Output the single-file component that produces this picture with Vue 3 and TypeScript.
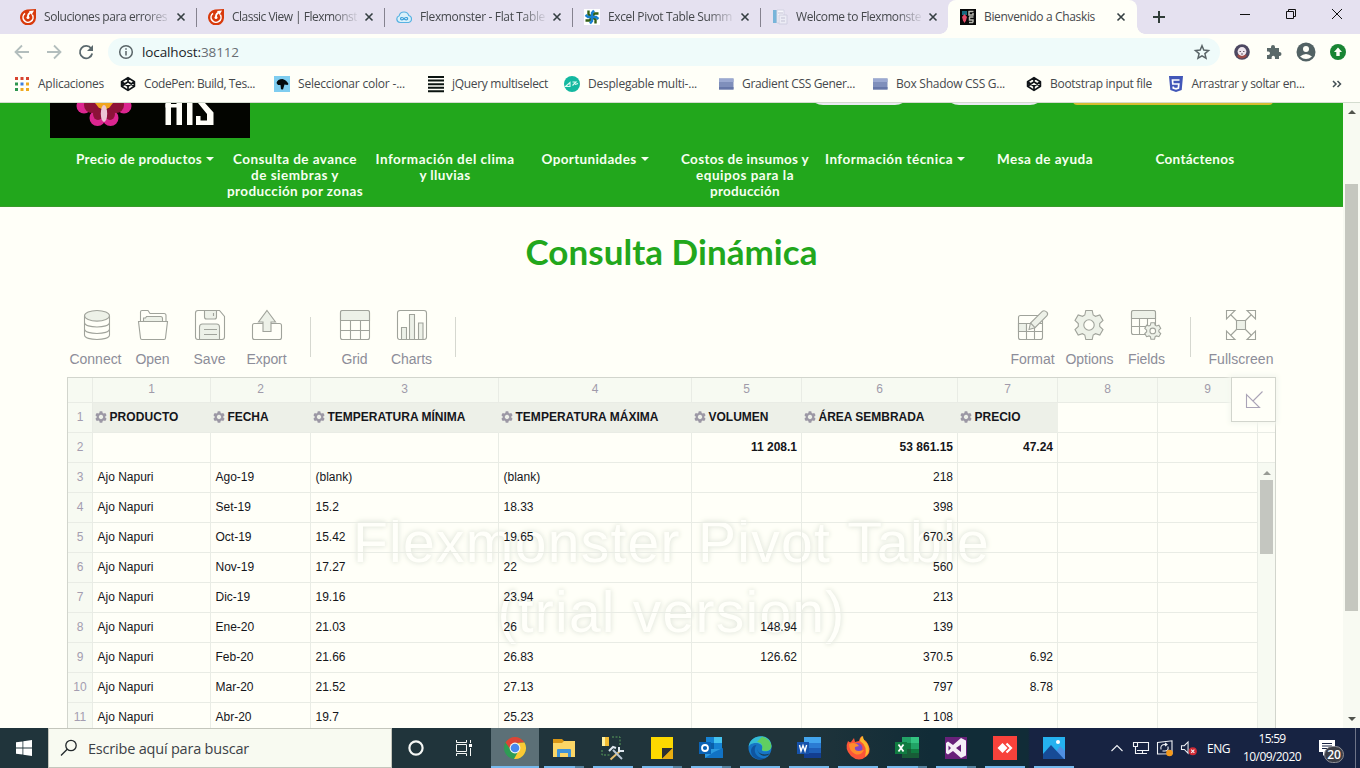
<script setup lang="ts">
interface Tab { title: string; width: number; icon: string }
interface Mark { title: string; width: number; icon: string }
interface Tool { label: string; icon: string; width: number }

// Spreads the letters of a label over a given pixel width.
const vFit = {
  mounted(el: HTMLElement, binding: { value: number }) {
    if (!binding.value) return
    const text = (el.textContent || '').trim()
    const natural = el.getBoundingClientRect().width
    el.style.letterSpacing = (binding.value - natural) / text.length + 'px'
  },
}

const pen = '<path d="M8 1.6 14.4 5.8V10.2L8 14.4 1.6 10.2V5.8Z M1.6 5.8 8 10.2 14.4 5.8 M1.6 10.2 8 5.8 14.4 10.2 M8 1.6V5.8M8 10.2V14.4" fill="none" stroke="#101418" stroke-width="1.7" stroke-linejoin="round"/>'
const folder = '<path d="M1 2.500h14.500v11H1z" fill="#7f8fbb"/><path d="M1 2.500h14.500v3.500H1z" fill="#9ba9d1"/><path d="M1 11h14.500v2.500H1z" fill="#6677a8"/>'
const swirl = '<path d="M7 .5 16 0v8a8 8 0 1 1-9-7.500z" fill="#d83a0c"/><path d="M5 4.300A5 5 0 1 0 12.300 5.600" fill="none" stroke="#fff" stroke-width="1.600"/><path d="M10.500 3.500Q7.500 5 8 8.500" fill="none" stroke="#fff" stroke-width="1.700"/><circle cx="8" cy="8.500" r="1.500" fill="#fff"/><path d="m9 2 5-.5-2.500 4.500z" fill="#fff"/>'

const tabs: Tab[] = [
  { title: 'Soluciones para errores', width: 123, icon: swirl },
  { title: 'Classic View | Flexmonst', width: 125, icon: swirl },
  { title: 'Flexmonster - Flat Table', width: 125, icon: '<path d="M4 13.500a3.500 3.500 0 0 1-.8-6.800A5 5 0 0 1 12.800 6.500a3.600 3.600 0 0 1 0 7z" fill="#d9f0fa" stroke="#58b2e2" stroke-width="1.200"/><path d="M8 9.700c-1-1.500-3.400-1.700-3.400 0s2.400 1.500 3.400 0 3.600-1.700 3.600 0-2.600 1.500-3.600 0z" fill="none" stroke="#3a9fda" stroke-width="1.200"/>' },
  { title: 'Excel Pivot Table Summ', width: 124, icon: '<path d="M0 0h16v16H0z" fill="#fff"/><g fill="none" stroke-width="2.400"><path d="M8 8 4.500 5.500V1.500M8 8l2.500-3.500h4M8 8l3.500 2.500v4M8 8l-2.500 3.500h-4" stroke="#335f16"/><path d="M8 8V4l2-2.500M8 8h4l2.500 2M8 8v4l-2 2.500M8 8H4L1.500 6" stroke="#177fd0"/></g>' },
  { title: 'Welcome to Flexmonste', width: 125, icon: '<path d="M1 1h4v13H1z" fill="#78b5da"/><path d="M5 1h7v13H5z" fill="#f6f6fb" stroke="#d3d3e3"/><path d="M7 6h8v9H7z" fill="#ececf5" stroke="#d0cfe0"/><path d="M9 9h4M9 12h4M6 4h5" stroke="#c2c1d3"/>' },
  { title: 'Bienvenido a Chaskis', width: 111, icon: '<path d="M0 0h16v16H0z" fill="#090909"/><path d="M2 2h5v4H2z" fill="#176c80"/><path d="m4.500 5 2.500 3-1 3.500-1.500 2.500L3 11.500 2 8z" fill="#e24c68"/><path d="M8.500 2.500h5M9 2v4h4V4M9 8h4.500M9.500 8v3h3.500v2.500M9 13.500h4" fill="none" stroke="#b8b8b0" stroke-width="1.500"/>' },
]

const marks: Mark[] = [
  { title: 'Aplicaciones', width: 66, icon: '<path d="M1 1h3v3H1zM6.500 1h3v3h-3zM12 1h3v3h-3z" fill="#d8442f"/><path d="M1 6.500h3v3H1z" fill="#2f9650"/><path d="M6.500 6.500h3v3h-3z" fill="#3d7fe0"/><path d="M12 6.500h3v3h-3zM12 12h3v3h-3zM6.500 12h3v3h-3z" fill="#efaa20"/><path d="M1 12h3v3H1z" fill="#2f9650"/>' },
  { title: 'CodePen: Build, Tes...', width: 111, icon: pen },
  { title: 'Seleccionar color -...', width: 107, icon: '<path d="M0 0h16v16H0z" fill="#7fcdf0"/><path d="M2.500 7q1-4 6-4 4 1 6 5l-1 1-3-.5-1.500 5-2-.2L6.500 9H4z" fill="#050a0c"/>' },
  { title: 'jQuery multiselect', width: 96, icon: '<path d="M0 1h16M0 4.600h16M0 8.200h16M0 11.800h16M0 15.200h16" stroke="#0b1410" stroke-width="2"/>' },
  { title: 'Desplegable multi-...', width: 109, icon: '<circle cx="8" cy="8" r="8" fill="#14b8a0"/><path d="M1.500 10.500 6 6.500v4zM8.500 6h3.500L8.500 9.500M11 8.500 14 7.500" fill="none" stroke="#dffaf2" stroke-width="1.100"/>' },
  { title: 'Gradient CSS Gener...', width: 113, icon: folder },
  { title: 'Box Shadow CSS G...', width: 109, icon: folder },
  { title: 'Bootstrap input file', width: 102, icon: pen },
  { title: 'Arrastrar y soltar en...', width: 113, icon: '<path d="M1 0h14l-1.300 14L8 16l-5.700-2z" fill="#4257b8"/><path d="M11.500 4h-7l.3 4h6l-.4 4L8 12.800 5.300 12l-.1-1.500" fill="none" stroke="#fff" stroke-width="1.700"/>' },
]

const menu = [
  { lines: ['Precio de productos'], widths: [126], caret: true },
  { lines: ['Consulta de avance', 'de siembras y', 'producción por zonas'], widths: [124, 88, 136], caret: false },
  { lines: ['Información del clima', 'y lluvias'], widths: [139, 51], caret: false },
  { lines: ['Oportunidades'], widths: [95], caret: true },
  { lines: ['Costos de insumos y', 'equipos para la', 'producción'], widths: [128, 98, 70], caret: false },
  { lines: ['Información técnica'], widths: [128], caret: true },
  { lines: ['Mesa de ayuda'], widths: [96], caret: false },
  { lines: ['Contáctenos'], widths: [79], caret: false },
]

const gear = 'M11.800 .5h6.400l1 4.500 2.300 1.300 4.300-1.300 3.200 5.500-3.300 3.100v2.800l3.300 3.100-3.200 5.500-4.300-1.300-2.300 1.300-1 4.500h-6.400l-1-4.500-2.300-1.300-4.300 1.300L1 19.500l3.300-3.100v-2.800L1 10.500 4.200 5l4.300 1.300L10.800 5z'
const group1: Tool[] = [
  { label: 'Connect', width: 52, icon: '<path d="M3.500 6v19c0 6 25 6 25 0V6" class="o"/><path d="M3.500 12.500c0 6 25 6 25 0M3.500 19c0 6 25 6 25 0" class="o"/><ellipse cx="16" cy="5.800" rx="12.500" ry="5.300" class="f"/>' },
  { label: 'Open', width: 34, icon: '<path d="M2.500 11V2q0-1.500 1.500-1.500h6l2 3h14q2 0 2 2V11" class="o"/><path d="M5.500 11V8h2l1-1.500h14q2 0 2 2V11" class="f"/><path d="M.5 11.500h29L27.500 28q0 1.500-1.500 1.500H4Q2.500 29.500 2.500 28z" class="o"/>' },
  { label: 'Save', width: 32, icon: '<path d="M3 .5h21.500l5 6V27q0 2.500-2.500 2.500H3Q.5 29.500.5 27V3Q.5.5 3 .5z" class="o"/><path d="M9.500.5h12V7q0 2-2 2h-8q-2 0-2-2zM4.500 29.500V17q0-3 3-3h14q3 0 3 3v12.500z" class="f"/><path d="M18.500 3v3M9 19.500h13M9 24.500h13" class="o"/>' },
  { label: 'Export', width: 40, icon: '<path d="M2.500 13.500h25q2 0 2 2v12q0 2-2 2h-25q-2 0-2-2v-12q0-2 2-2z" class="o"/><path d="M15 .5 23.500 12H19v9.500h-8V12H6.500z" class="f"/>' },
]
const group2: Tool[] = [
  { label: 'Grid', width: 26, icon: '<rect x=".5" y=".5" width="29" height="29" rx="2" class="o"/><path d="M.5 10.500V2.500q0-2 2-2h25q2 0 2 2v8z" class="f"/><path d="M10.500 10.500v19M20.500 10.500v19M.5 20.500h29" class="o"/>' },
  { label: 'Charts', width: 41, icon: '<rect x=".5" y=".5" width="29" height="29" rx="2.500" class="o"/><path d="M4.500 29.500v-12h5v12zM12.500 29.500v-25h5v25zM21.500 29.500V13h4.500v16.500z" class="f"/>' },
]
const group3: Tool[] = [
  { label: 'Format', width: 44, icon: '<rect x=".5" y="5.500" width="24" height="24" rx="2" class="o"/><path d="M.5 13.500h8v8h-8z" class="f"/><path d="M.5 13.500h24M.5 21.500h24M8.500 13.500v16M16.500 13.500v16" class="o"/><path d="M11 19.500 12.500 13 24.500 1.200Q26.500 0 28.800 2.200 30.500 4 28.800 6L17 17.700z" class="f"/><path d="m12.500 13 4.500 4.700" class="o"/>' },
  { label: 'Options', width: 48, icon: '<path d="' + gear + '" class="f"/><circle cx="15" cy="15" r="5.200" class="h"/>' },
  { label: 'Fields', width: 37, icon: '<rect x=".5" y=".5" width="24" height="24" rx="2" class="o"/><path d="M.5 8.500v-6q0-2 2-2h20q2 0 2 2v6z" class="f"/><path d="M8.500 8.500v16M16.500 8.500v16M.5 16.500h24" class="o"/><g transform="translate(13.200 12.400) scale(.57)"><path d="' + gear + '" class="f w"/><circle cx="15" cy="15" r="5" class="h w"/></g>' },
]
const group4: Tool[] = [
  { label: 'Fullscreen', width: 65, icon: '<path d="M10.500 10.500h9v9h-9z" class="f"/><path d="m4.500 4.500 6 6m9 0 6-6m-15 15-6 6m15-6 6 6" class="o"/><path d="M.5.500h8.500l-8.500 8.500zM21 .5h8.500V9zM.5 21v8.500H9zM29.500 21v8.500H21z" class="h"/>' },
]

const headers = ['PRODUCTO', 'FECHA', 'TEMPERATURA MÍNIMA', 'TEMPERATURA MÁXIMA', 'VOLUMEN', 'ÁREA SEMBRADA', 'PRECIO']
const headerWidths = [69, 41, 138, 143, 60, 106, 46]
const rows: string[][] = [
  ['', '', '', '', '11 208.1', '53 861.15', '47.24'],
  ['Ajo Napuri', 'Ago-19', '(blank)', '(blank)', '', '218', ''],
  ['Ajo Napuri', 'Set-19', '15.2', '18.33', '', '398', ''],
  ['Ajo Napuri', 'Oct-19', '15.42', '19.65', '', '670.3', ''],
  ['Ajo Napuri', 'Nov-19', '17.27', '22', '', '560', ''],
  ['Ajo Napuri', 'Dic-19', '19.16', '23.94', '', '213', ''],
  ['Ajo Napuri', 'Ene-20', '21.03', '26', '148.94', '139', ''],
  ['Ajo Napuri', 'Feb-20', '21.66', '26.83', '126.62', '370.5', '6.92'],
  ['Ajo Napuri', 'Mar-20', '21.52', '27.13', '', '797', '8.78'],
  ['Ajo Napuri', 'Abr-20', '19.7', '25.23', '', '1 108', ''],
]

const apps = [
  { name: 'chrome', split: false, icon: '<circle cx="12" cy="12" r="11" fill="#2f9c55"/><path d="M2.500 6.500A11 11 0 0 1 21.500 6.500L12 7 8 14z" fill="#dc4437"/><path d="M21.500 6.500A11 11 0 0 1 11 23l5-9-1-7z" fill="#fcc934"/><circle cx="12" cy="12" r="5.400" fill="#f4f5f0"/><circle cx="12" cy="12" r="4.300" fill="#4688f0"/>' },
  { name: 'explorer', split: true, icon: '<path d="M1 3h9l2 2h11v5H1z" fill="#d89616"/><path d="M1 7h9l2-2h11v16H1z" fill="#fbd666"/><path d="M5 21v-7q0-1 1-1h12q1 0 1 1v7h-3v-4H8v4z" fill="#3f93d8"/>' },
  { name: 'sql', split: false, icon: '<path d="M1 1h7v9H1z" fill="#f3bc32"/><path d="M1 1h3v9H1z" fill="#fff0a0"/><path d="M11 1h8v9M1 14v5h9" fill="none" stroke="#5aa05c" stroke-dasharray="2 1.500"/><path d="m9.500 23.500 10-9" stroke="#e7bf71" stroke-width="2"/><path d="m12 14 9 9" stroke="#b8c5d4" stroke-width="2"/><path d="m8 15 4-4 3 1M18 11v4h5" fill="none" stroke="#dfe7ef" stroke-width="2"/>' },
  { name: 'notes', split: true, icon: '<path d="M1 1h22v22H1z" fill="#fdd900"/><path d="M12 23V12h11z" fill="#2d3033"/><path d="m12 23 11-11v11z" fill="#e9ad10"/>' },
  { name: 'outlook', split: true, icon: '<path d="M7 1h16v12H7z" fill="#1683d4"/><path d="M15 1h8v6h-8z" fill="#46c4f0"/><path d="M7 7h8v7H7z" fill="#0a5fa9"/><path d="M6 13h18v9H6z" fill="#2b9ae0"/><path d="m6 22 9-6 9-4v10z" fill="#1172c4"/><path d="M0 6h12v12H0z" fill="#0b63b5"/><circle cx="6" cy="12" r="3" fill="none" stroke="#fff" stroke-width="1.800"/>' },
  { name: 'edge', split: false, icon: '<circle cx="12" cy="12" r="11.500" fill="#1675c5"/><path d="M.6 11C2-3 23-3.500 23.500 10c0 5-6 6.500-9.500 4.500 2-3-.5-7-5-7.500C4 6.500 1 9 .6 11z" fill="#35bdd5"/><path d="M14 .8c12 2.700 12 16.200 2 14-3.500-.8-1.500-2-1.500-4C14 7 11 6 9 6z" fill="#60ce61"/><path d="M8.500 9c-5 7 1.500 15 9.500 13C11 25.500 3 22 3 15c0-3 2.500-6 5.500-6z" fill="#0f55a0"/><path d="M9 11.500c0 6 6 8.500 12.500 6-3 4.500-12.500 2-12.500-6z" fill="#1b3a50"/>' },
  { name: 'word', split: false, icon: '<path d="M7 1h17v6H7z" fill="#43a5ee"/><path d="M7 7h17v5H7z" fill="#2b7cd3"/><path d="M7 12h17v5H7z" fill="#1e5fb8"/><path d="M7 17h17v5H7z" fill="#133e91"/><path d="M0 6h12v12H0z" fill="#1652ab"/><path d="m2.500 9 1.500 6 2-5.500L8 15l1.600-6" fill="none" stroke="#fff" stroke-width="1.400"/>' },
  { name: 'firefox', split: false, icon: '<path d="M2 5q2 2 3 1l3-4 1 4 4-1q0-3 3-5 0 3 4 5 7 9 1 15-8 7-16 0Q-2 13 2 5z" fill="#fb5538"/><path d="M14 5q0-4 3-5 0 4 4 7 5 9-2 14 3-11-5-16z" fill="#fcb72c"/><circle cx="11.500" cy="12" r="5" fill="#8048c5"/><path d="M3 8q4-2 8 0l2 2-4 1q-1 4 4 4l5-1q-3 6-9 4-6-3-6-10z" fill="#ff8c2c"/>' },
  { name: 'excel', split: true, icon: '<path d="M7 1h9v6H7z" fill="#21a366"/><path d="M16 1h8v6h-8z" fill="#33c481"/><path d="M7 7h9v6H7z" fill="#107c41"/><path d="M16 7h8v6h-8z" fill="#21a366"/><path d="M7 13h17v9H7z" fill="#185c37"/><path d="M16 13h8v4h-8z" fill="#107c41"/><path d="M0 6h12v12H0z" fill="#107c41"/><path d="m3.500 8.500 5 7M8.500 8.500l-5 7" stroke="#fff" stroke-width="1.800"/>' },
  { name: 'studio', split: true, icon: '<path d="M1 1h22v22H1z" fill="#68217a"/><path fill-rule="evenodd" d="m17 2 5 2.500v15L17 22l-8-7-5 3.500L2 17V7l2-1.500L9 9zM17 8.500 12 12l5 4zM4.500 9.500v5L7 12z" fill="#f5eff7"/>' },
  { name: 'anydesk', split: false, icon: '<path d="M0 0h24v24H0z" fill="#f8423b"/><path d="m9.500 7 5 5-5 5-5-5z" fill="#fff"/><path d="m13.500 7.500 4.500 4.500-4.500 4.500" fill="none" stroke="#fff" stroke-width="2.200"/>' },
  { name: 'photos', split: false, icon: '<path d="M1 1h22v22H1z" fill="#25b1ef"/><path d="m9 23 9-13 5 5v8z" fill="#4f8fe2"/><path d="M1 18 9 9l13 14H1z" fill="#174b96"/><circle cx="16" cy="6" r="2" fill="#fff"/>' },
]
</script>

<template>
  <div class="screen">
    <div class="tabstrip">
      <div v-for="(t, i) in tabs" :key="i" class="tab" :class="{ active: i === 5, last: i === 4 }">
        <svg class="fav" viewBox="0 0 16 16" v-html="t.icon"></svg>
        <div class="tab-title"><span v-fit="t.width" class="ui">{{ t.title }}</span></div>
        <svg class="close" viewBox="0 0 10 10"><path d="M1.500 1.500l7 7M8.500 1.500l-7 7" /></svg>
      </div>
      <svg class="plus" viewBox="0 0 12 12"><path d="M6 0v12M0 6h12" /></svg>
      <div class="controls">
        <svg viewBox="0 0 12 12"><path d="M1 6.500h10" /></svg>
        <svg viewBox="0 0 12 12"><path d="M1.500 3.500h7v7h-7zM3.500 3.500v-2h7v7h-2" /></svg>
        <svg viewBox="0 0 12 12"><path d="M1 1l10 10M11 1L1 11" /></svg>
      </div>
    </div>

    <div class="addressbar">
      <svg class="nav-ic dim" viewBox="0 0 16 16"><path d="M15 8H2M8 1.500 1.500 8 8 14.500" /></svg>
      <svg class="nav-ic dim" viewBox="0 0 16 16"><path d="M1 8h13M8 1.500 14.500 8 8 14.500" /></svg>
      <svg class="nav-ic" viewBox="0 0 16 16"><path d="M13.200 4.500A6.200 6.200 0 1 0 14.200 9.500" stroke-width="2" /><path d="M15 1v6H9z" fill="#5b696d" stroke="none" /></svg>
      <div class="omnibox">
        <svg class="info" viewBox="0 0 16 16"><circle cx="8" cy="8" r="6.300" /><path d="M8 7v4.500M8 4.300v1.500" /></svg>
        <span v-fit="97" class="url">localhost:<i>38112</i></span>
        <svg class="star" viewBox="0 0 16 16"><path d="m8 1.800 1.800 4.300 4.700.4-3.600 3.100 1.100 4.600L8 11.800l-4 2.400 1.100-4.600-3.600-3.100 4.700-.4z" /></svg>
      </div>
      <svg class="ext e1" viewBox="0 0 16 16"><circle cx="8" cy="8" r="7.800" fill="#4d4861" /><path d="M3 12q4 5 10 0l-3-3H6z" fill="#9b4b47" /><circle cx="8" cy="7.500" r="4.400" fill="#eee5ed" /><path d="M5.500 7.500h1.500M9 7.500h1.500M7 10h2" stroke="#6b5b6b" /></svg>
      <svg class="ext e2" viewBox="0 0 16 16"><path d="M1 4h4V3a2 2 0 0 1 4 0v1h4v4h.500a2 2 0 0 1 0 4H13v3H9v-1.500a1.700 1.700 0 0 0-3.400 0V15H1v-4h1.300a1.700 1.700 0 0 0 0-3.400H1z" fill="#5a6969" /></svg>
      <svg class="ext e3" viewBox="0 0 20 20"><circle cx="10" cy="10" r="9.500" fill="#526264" /><circle cx="10" cy="7" r="3" fill="#fffff8" /><path d="M4 14.500q6-5 12 0-6 5-12 0z" fill="#fffff8" /></svg>
      <svg class="ext e4" viewBox="0 0 16 16"><circle cx="8" cy="8" r="8" fill="#198534" /><path d="m8 3.500 4 4.500H9.700v4H6.300V8H4z" fill="#fffff8" /></svg>
    </div>

    <div class="bookmarks">
      <div v-for="(m, i) in marks" :key="i" class="mark">
        <svg viewBox="0 0 16 16" v-html="m.icon"></svg>
        <span v-fit="m.width" class="ui">{{ m.title }}</span>
      </div>
      <svg class="more" viewBox="0 0 10 8"><path d="m1 1 3 3-3 3M5.500 1l3 3-3 3" /></svg>
    </div>

    <div class="viewport">
      <div class="page">
        <header>
          <div class="top">
            <svg class="logo" viewBox="0 0 200 35">
              <rect width="200" height="35" fill="#030500" />
              <g fill="#dc2690"><circle cx="34" cy="3" r="7.500" /><circle cx="74" cy="3" r="7.500" /><circle cx="47.500" cy="15" r="8" /><circle cx="60.500" cy="15" r="8" /></g>
              <g fill="#8d1238"><circle cx="42" cy="2" r="8" /><circle cx="66" cy="2" r="8" /><ellipse cx="48" cy="11" rx="5" ry="6" /><ellipse cx="60" cy="11" rx="5" ry="6" /></g>
              <path d="M45 0h18l-4 5-5 2-5-2z" fill="#f0a51d" />
              <ellipse cx="54" cy="10.500" rx="3.200" ry="8.500" fill="#ecc5d4" />
              <g fill="#fffff8">
                <rect x="115.500" width="5.500" height="22" /><rect x="126.500" width="5.500" height="22" /><rect x="115.500" y="1" width="16.500" height="3.500" />
                <rect x="137" width="5.500" height="22" />
                <path d="M148 0h7l8.500 9.500V22H146v-9h4.500v4.500h6.500V11z" />
              </g>
            </svg>
            <div class="pill a"></div><div class="pill b"></div><div class="pill c"></div>
          </div>
          <nav>
            <div v-for="(m, i) in menu" :key="i" class="menu-item">
              <div v-for="(l, j) in m.lines" :key="j" class="menu-line">
                <span v-fit="m.widths[j]">{{ l }}</span><b v-if="m.caret" class="caret"></b>
              </div>
            </div>
          </nav>
        </header>

        <h1><span v-fit="292">Consulta Dinámica</span></h1>

        <div class="toolbar">
          <template v-for="(g, gi) in [group1, group2, group3, group4]" :key="gi">
            <div class="group" :class="'g' + gi">
              <div v-for="t in g" :key="t.label" class="tool">
                <svg viewBox="0 0 30 30" v-html="t.icon"></svg>
                <span v-fit="t.width">{{ t.label }}</span>
              </div>
            </div>
            <i v-if="gi < 3" class="sep" :class="'s' + gi"></i>
          </template>
        </div>

        <div class="grid-box">
          <div class="watermark">
            <div><span v-fit="637">Flexmonster Pivot Table</span></div>
            <div><span v-fit="348">(trial version)</span></div>
          </div>
          <div class="row head">
            <div class="cell num"></div>
            <div v-for="n in 9" :key="n" class="cell">{{ n }}</div>
            <div class="cell end"></div>
          </div>
          <div class="row titles">
            <div class="cell num">1</div>
            <div v-for="(h, i) in headers" :key="h" class="cell field">
              <svg viewBox="0 0 30 30"><path fill-rule="evenodd" :d="gear + 'M15 9.500a5.500 5.500 0 1 0 .01 0z'" /></svg>
              <span v-fit="headerWidths[i]">{{ h }}</span>
            </div>
            <div class="cell"></div><div class="cell"></div><div class="cell end"></div>
          </div>
          <div v-for="(r, i) in rows" :key="i" class="row" :class="{ total: i === 0 }">
            <div class="cell num">{{ i + 2 }}</div>
            <div v-for="(c, j) in r" :key="j" class="cell" :class="{ right: j > 3 }">{{ c }}</div>
            <div class="cell"></div><div class="cell"></div>
            <div class="cell end" :class="{ track: i > 0 }"></div>
          </div>
          <div class="inner-scroll"><b class="up"></b><b class="thumb"></b></div>
          <div class="corner">
            <svg viewBox="0 0 18 18"><path d="M1.500 3.500v13h13zM8 10l9.500-9.500" /></svg>
          </div>
        </div>
      </div>
      <div class="scrollbar"><b class="up"></b><b class="thumb"></b><b class="down"></b></div>
    </div>

    <div class="taskbar">
      <div class="start"><svg viewBox="0 0 16 16"><path d="M0 2.300 6.500 1.400v6.100H0zM7.300 1.300 16 0v7.500H7.300zM0 8.400h6.500v6.200L0 13.700zM7.300 8.400H16V16l-8.700-1.300z" /></svg></div>
      <div class="search">
        <svg viewBox="0 0 18 18"><circle cx="11" cy="6.500" r="5.200" /><path d="M7.200 10.300 1 16.500" /></svg>
        <span v-fit="161">Escribe aquí para buscar</span>
      </div>
      <div class="sys"><svg viewBox="0 0 16 16"><circle cx="8" cy="8" r="6.600" stroke-width="2.200" /></svg></div>
      <div class="sys"><svg viewBox="0 0 16 16"><path d="M.5 0v2.500h10V0M.5 4.500h10v7H.5zM.5 16v-2.500h10V16M14.500 0v3M14.500 8v8" /><path d="M13 4h3v3h-3z" fill="#fff" stroke="none" /></svg></div>
      <div class="apps">
        <div v-for="a in apps" :key="a.name" class="app" :class="[a.name, { split: a.split }]">
          <svg viewBox="0 0 24 24" v-html="a.icon"></svg>
        </div>
      </div>
      <div class="tray">
        <svg class="t1" viewBox="0 0 16 16"><path d="m2.500 11 5.500-5.500 5.500 5.500" /></svg>
        <svg class="t2" viewBox="0 0 16 16"><path d="M4.500 2.500h11v8H4M9.500 10.500v3M5 13.500h9M.5 2.500h4v4h-4zM2.500 6.500v7h3" /></svg>
        <svg class="t3" viewBox="0 0 16 16"><path d="M.5 2.500 15 .800v13L.5 14zM4 9.500q-1-5 4-5h2M8 3l2 1.500L8 6M11 6.500q1 5-4 4.500H5.500" /><circle cx="12.500" cy="13" r="3.300" class="orange" /></svg>
        <svg class="t4" viewBox="0 0 17 16"><path d="M.5 5.500h3l4-4v12l-4-4h-3z" /><circle cx="12.500" cy="11.500" r="4.300" class="red" /><path d="m10.800 9.800 3.400 3.400M14.200 9.800l-3.400 3.400" /></svg>
        <span v-fit="23" class="lang">ENG</span>
        <div class="clock"><span v-fit="27">15:59</span><span v-fit="58">10/09/2020</span></div>
        <div class="notice">
          <svg viewBox="0 0 16 16"><path class="bubble" d="M0 0h16v12H8l-4 4v-4H0z" /><path class="lines" d="M3 3.500h10M3 6h10M3 8.500h7" /></svg>
          <b>20</b>
        </div>
      </div>
    </div>
  </div>
</template>

<style>
body { margin: 0; overflow: hidden; }
.o, .f, .h { stroke: #a0a39b; stroke-width: 1.1; }
.o { fill: none; }
.f { fill: #edf1e8; }
.h { fill: #fffff8; }
.w { stroke-width: 1.9; }
</style>

<style scoped>
.screen { width: 1360px; height: 768px; display: flex; flex-direction: column; background: #fffff8; overflow: hidden; font-family: "Liberation Sans", Arial, sans-serif; }
.screen * { box-sizing: border-box; }
svg { display: block; flex: none; overflow: visible; }
span { display: inline-block; white-space: nowrap; }
.ui { font: 12px/16px "Open Sans", "Noto Sans", sans-serif; color: #45484c; }

.tabstrip { height: 34px; flex: none; display: flex; background: #e5e1f0; padding-left: 8px; }
.tab { position: relative; width: 188px; height: 34px; display: flex; align-items: center; padding-left: 12px; }
.tab::after { content: ""; position: absolute; right: -1px; top: 8px; width: 1px; height: 19px; background: #85828f; }
.tab.last::after { display: none; }
.tab.active { width: 189px; background: #fffff8; border-radius: 8px 8px 0 0; }
.tab.active::before { content: ""; position: absolute; left: -8px; bottom: 0; width: 8px; height: 8px; background: radial-gradient(circle at 0 0, transparent 7.500px, #fffff8 8px); }
.tab.active::after { right: -8px; top: 26px; width: 8px; height: 8px; background: radial-gradient(circle at 100% 0, transparent 7.500px, #fffff8 8px); }
.fav { width: 16px; height: 16px; overflow: hidden; }
.tab-title { margin-left: 8px; width: 125px; overflow: hidden; height: 18px; mask-image: linear-gradient(90deg, #000 100px, transparent 128px); }
.tab-title .ui { display: block; width: max-content; padding-top: 1px; }
.active .tab-title { mask-image: none; }
.close { width: 10px; height: 10px; margin-left: 7px; }
.close path { stroke: #353f42; stroke-width: 1.6; }
.plus { width: 12px; height: 12px; margin: 11px 0 0 16px; }
.plus path { stroke: #303c38; stroke-width: 2; }
.controls { display: flex; gap: 34px; margin: 8px 0 0 74px; }
.controls svg { width: 12px; height: 12px; }
.controls path { fill: none; stroke: #111; stroke-width: 1; }

.addressbar { height: 36px; flex: none; display: flex; align-items: center; padding-left: 14px; }
.nav-ic { width: 16px; height: 16px; margin-right: 16px; }
.nav-ic path { fill: none; stroke: #5b696d; stroke-width: 1.8; }
.nav-ic.dim path { stroke: #b3bebd; }
.nav-ic path[fill] { fill: #5b696d; stroke: none; }
.omnibox { width: 1112px; height: 28px; margin-left: -2px; border-radius: 14px; background: #effbfa; display: flex; align-items: center; padding: 0 10px; }
.info, .star { width: 16px; height: 16px; }
.info *, .star * { fill: none; stroke: #596467; stroke-width: 1.5; }
.url { margin-left: 8px; font: 13.500px/18px "Open Sans", "Noto Sans", sans-serif; color: #202428; }
.url i { font-style: normal; color: #686d73; }
.star { margin-left: auto; }
.ext { width: 16px; height: 16px; }
.e1 { margin-left: 14px; }
.e2 { margin-left: 16px; }
.e3 { width: 20px; height: 20px; margin-left: 14px; }
.e4 { margin-left: 14px; }

.bookmarks { position: relative; height: 33px; flex: none; display: grid; grid-template-columns: 106px 154px 154px 136px 154px 154px 154px 142px 154px; padding-left: 14px; border-bottom: 1px solid #d4dccf; }
.mark { display: flex; align-items: center; height: 28px; }
.mark svg { width: 16px; height: 16px; margin-right: 8px; }
.mark:nth-child(9) svg { margin-left: -.5px; }
.more { position: absolute; left: 1332px; top: 10px; width: 10px; height: 8px; }
.more path { fill: none; stroke: #445055; stroke-width: 1.5; }

.viewport { height: 625px; flex: none; display: flex; overflow: hidden; }
.page { width: 1343px; height: 625px; overflow: hidden; }
header { height: 104px; background: #22a71c; border-bottom: 1px solid #399b2b; }
.top { height: 35px; display: flex; padding-left: 50px; }
.logo { width: 200px; height: 35px; overflow: hidden; }
.pill { height: 30px; margin-top: -28px; border-radius: 15px; background: #ebeaf2; clip-path: inset(28px 0 0 0); }
.a { margin-left: 558px; width: 102px; }
.b { margin-left: 34px; width: 101px; }
.c { margin-left: 28px; width: 200px; border-radius: 4px; background: #d4bd31; }
nav { display: flex; padding: 13px 0 0 70px; }
.menu-item { width: 150px; text-align: center; }
.menu-line { height: 16px; display: flex; align-items: center; justify-content: center; color: #f6fff0; font: 700 13.500px/16px Lato, sans-serif; }
.caret { border: 4px solid transparent; border-top-color: #f6fff0; border-bottom: 0; margin-left: 4px; }
h1 { margin: 0; height: 103px; padding-top: 22px; text-align: center; font: 700 35px/44px Lato, sans-serif; color: #22a71c; }

.toolbar { height: 67px; display: flex; padding-left: 67px; }
.group { display: flex; }
.tool { width: 57px; height: 60px; display: flex; flex-direction: column; align-items: center; color: #8d8d99; font-size: 14px; line-height: 16px; }
.tool svg { width: 30px; height: 30px; margin-bottom: 11px; }
.sep { width: 1px; height: 40px; margin-top: 7px; background: #d6d8d0; }
.s0 { margin: 7px 15px 0 15px; }
.s1 { margin: 7px 0 0 15px; }
.g2 { margin-left: 548px; }
.g2 .tool:nth-child(n+2) svg { margin-right: 1px; }
.s2 { margin: 7px 15px 0 15px; }
.g3 .tool { width: 70px; }

.grid-box { position: relative; z-index: 0; width: 1209px; margin-left: 67px; border: 1px solid #d2d5cd; border-bottom: 0; }
.row { display: grid; grid-template-columns: 25px 118px 100px 188px 193px 110px 156px 100px 100px 100px 17px; height: 30px; font-size: 12px; line-height: 29px; color: #15161b; }
.cell { border-right: 1px solid #e9ece5; border-bottom: 1px solid #e9ece5; padding: 0 4px 0 4.500px; white-space: nowrap; }
.cell.end { border-right: 0; }
.cell.right { text-align: right; }
.cell.num { background: #f7faf2; color: #a49db0; text-align: center; padding: 0; }
.head { height: 25px; line-height: 22px; background: #f7faf2; color: #a09aaa; text-align: center; }
.head .cell { padding: 0; }
.total { font-weight: 700; }
.total .num { font-weight: 400; }
.track { background: #f7faf2; border-bottom: 0; }
.cell.field { display: flex; align-items: center; background: #edf0e8; border-right-color: #edf0e8; font-weight: 700; padding: 0 0 0 2px; }
.field svg { width: 12px; height: 12px; margin: 0 2.500px 2px 0; }
.field svg path { fill: #9c98a5; }
.inner-scroll { position: absolute; left: 1190px; top: 85px; width: 17px; height: 265px; }
.up, .down { position: absolute; left: 5px; border: 4px solid transparent; border-bottom-color: #979a94; border-top: 0; top: 8px; }
.inner-scroll .thumb { position: absolute; left: 2px; top: 17px; width: 13px; height: 74px; background: #c4c6c0; }
.watermark { position: absolute; z-index: -1; left: 0; right: 0; top: 129px; text-align: center; font-size: 57px; line-height: 70px; color: #fffffa; pointer-events: none; text-shadow: 0 0 4px #e4e8de, 0 0 7px #e8ece3; }
.corner { position: absolute; right: -1px; top: -1px; width: 45px; height: 45px; border: 1px solid #d2d5cd; background: #fffff8; box-shadow: 0 0 5px 2px #f4f7ef; display: flex; align-items: center; justify-content: center; }
.corner svg { width: 18px; height: 18px; }
.corner path { fill: none; stroke: #aaa4b7; stroke-width: 1.1; }

.scrollbar { position: relative; width: 17px; background: #f8faf2; }
.scrollbar .up { border-bottom-color: #50534c; top: 7px; }
.scrollbar .thumb { position: absolute; left: 2px; top: 81px; width: 13px; height: 427px; background: #c5c7bf; }
.scrollbar .down { top: 614px; border: 4px solid transparent; border-top-color: #50534c; border-bottom: 0; }

.taskbar { height: 40px; flex: none; display: flex; color: #fff; font-family: "Open Sans", "Noto Sans", sans-serif; background: linear-gradient(90deg, #20343b 0 800px, #112c37 930px 1028px, #172342 1030px); }
.start, .sys { width: 48px; display: flex; align-items: center; justify-content: center; }
.start svg, .sys svg { width: 16px; height: 16px; }
.start path { fill: #fff; }
.sys circle, .sys path:first-child { fill: none; stroke: #f5f7f5; }
.search { width: 344px; background: #f8faf1; border: 1px solid #c4c6bc; display: flex; align-items: center; color: #3c4147; font-size: 14.500px; padding-left: 11px; }
.search svg { width: 18px; height: 18px; margin-right: 10px; }
.search svg * { fill: none; stroke: #22282b; stroke-width: 1.3; }
.apps { display: flex; margin-left: 3px; gap: 1px; }
.app { position: relative; width: 48px; height: 40px; display: flex; align-items: center; justify-content: center; }
.app svg { width: 24px; height: 24px; }
.app::after { content: ""; position: absolute; left: 4px; right: 4px; bottom: 0; height: 2px; background: #76b9ed; }
.app.split::after { background: linear-gradient(90deg, #76b9ed 31px, #55829f 31px); }
.chrome { background: #5c7077; }
.chrome::after { left: 0; right: 0; }
.tray { display: flex; align-items: center; margin-left: 31px; }
.tray svg { width: 16px; height: 16px; }
.tray svg path { fill: none; stroke: #f1f3f7; stroke-width: 1.1; }
.orange { fill: #f79a19; }
.red { fill: #d02b35; }
.t1, .t2, .t3 { margin-right: 8px; }
.lang { margin-left: 10px; font-size: 12px; }
.clock { width: 64px; margin-left: 10px; display: flex; flex-direction: column; align-items: center; font-size: 12px; line-height: 18px; }
.notice { position: relative; width: 16px; height: 16px; margin-left: 15px; }
.tray .notice svg .bubble { fill: #fff; stroke: none; }
.tray .notice svg .lines { stroke: #172342; }
.notice b { position: absolute; left: 5px; top: 6px; width: 20px; height: 17px; border-radius: 9px; background: #3b3d45; border: 1px solid #8e8f96; font: 600 12px/15px "Open Sans", sans-serif; text-align: center; }
.taskbar::after { content: ""; margin-left: auto; margin-right: 4px; width: 1px; background: #6e7487; }
</style>
